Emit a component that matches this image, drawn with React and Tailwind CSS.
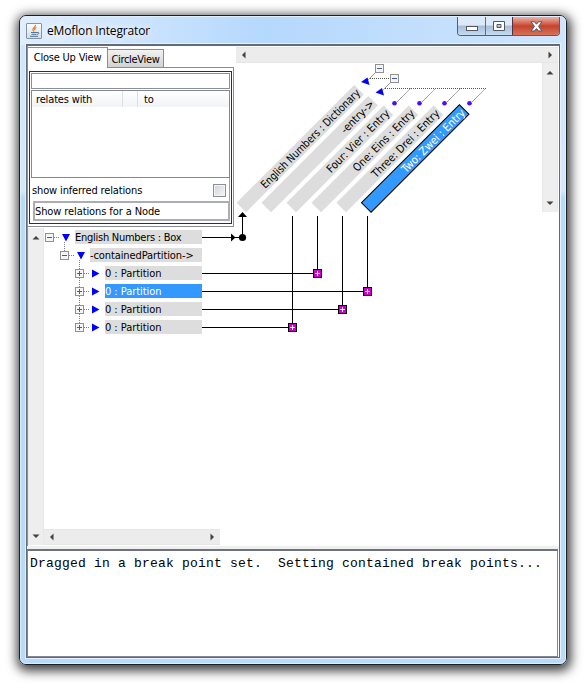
import React from "react";

const COLUMNS = [
  { label: "English Numbers : Dictionary", x: 236.5, len: 166.5, text: 135 },
  { label: "-entry->", x: 261.5, len: 151, text: 42 },
  { label: "Four: Vier : Entry", x: 286.5, len: 137.5, text: 84 },
  { label: "One: Eins : Entry", x: 311.5, len: 137.5, text: 82 },
  { label: "Three: Drei : Entry", x: 336.5, len: 137.5, text: 91 },
  { label: "Two: Zwei : Entry", x: 361.5, len: 138.5, text: 85, selected: true },
];

const LINKS = [
  { x: 317, y: 273 },
  { x: 367, y: 291 },
  { x: 342, y: 309 },
  { x: 292, y: 327 },
];

const ROWS = [
  { label: "English Numbers : Box", depth: 0, open: true, tracking: "tracking-[-0.26px]" },
  { label: "-containedPartition->", depth: 1, open: true, tracking: "tracking-[-0.1px]" },
  { label: "0 : Partition", depth: 2, tracking: "tracking-[-0.05px]" },
  { label: "0 : Partition", depth: 2, selected: true, tracking: "tracking-[-0.05px]" },
  { label: "0 : Partition", depth: 2, tracking: "tracking-[-0.05px]" },
  { label: "0 : Partition", depth: 2, last: true, tracking: "tracking-[-0.05px]" },
];

function Expander({ x, y, plus }) {
  return (
    <g shapeRendering="crispEdges">
      <rect x={x + 0.5} y={y + 0.5} width="8" height="8" fill="#f5f5f5" stroke="#919191" />
      <path d={`M${x + 2} ${y + 4.5}h5`} stroke="#3b5fae" />
      {plus && <path d={`M${x + 4.5} ${y + 2}v5`} stroke="#3b5fae" />}
    </g>
  );
}

function TreeRow({ label, depth, open, selected, last, tracking }) {
  const x = 1 + depth * 15;
  const w = 31 + depth * 15;
  return (
    <div className="flex h-[18px] items-center">
      <svg width={w} height="18" viewBox={`0 0 ${w} 18`} className="shrink-0">
        <g stroke="#808080" strokeDasharray="1 1" shapeRendering="crispEdges">
          <path d={`M${x + 9} 9.5h6`} />
          {depth > 0 && <path d={`M${x + 4.5} 0v${last ? 5 : depth === 2 ? 18 : 5}`} />}
          {open && <path d={`M${x + 19.5} 14v4`} />}
        </g>
        <Expander x={x} y={5} plus={!open} />
        {open ? (
          <path d={`M${x + 17} 6h8l-4 7.5z`} fill="#0000ff" />
        ) : (
          <path d={`M${x + 17} 5.5v8l7.5-4z`} fill="#0000ff" />
        )}
      </svg>
      <div
        className={
          "flex h-[14px] flex-1 items-center whitespace-nowrap pt-px text-[11px] leading-[14px] " +
          tracking +
          (selected ? " bg-[#3399ff] text-white" : " bg-[#dddddd] text-black")
        }
      >
        {label}
      </div>
    </div>
  );
}

function Arrow({ dir }) {
  const shapes = {
    up: "M0.5 6.5h7L4 3z",
    down: "M0.5 2.5h7L4 6z",
    left: "M5.5 0.5v7L2 4z",
    right: "M2.5 0.5v7L6 4z",
  };
  return (
    <svg width="8" height="8" viewBox="0 0 8 8" className="shrink-0">
      <path d={shapes[dir]} fill="#404040" />
    </svg>
  );
}

function HBar({ className }) {
  return (
    <div className={"flex h-4 shrink-0 items-center justify-between border-y border-[#e6e6e6] bg-[#ececec] px-1 " + className}>
      <Arrow dir="left" />
      <Arrow dir="right" />
    </div>
  );
}

function VBar({ className }) {
  return (
    <div
      className={
        "flex w-4 shrink-0 flex-col items-center justify-between border-x border-[#e8e8e8] bg-[#eeeeee] py-[5px] " + className
      }
    >
      <Arrow dir="up" />
      <Arrow dir="down" />
    </div>
  );
}

function Matrix() {
  return (
    <svg width="306" height="282" viewBox="236 63 306 282" className="shrink-0 overflow-visible">
      <g stroke="#555" fill="none" strokeDasharray="1 1" shapeRendering="crispEdges">
        <path d="M370 78.5h21M385 88.5h101" />
      </g>
      <g stroke="#777" fill="none" strokeWidth="1">
        <path d="M376 72l-10 10M391 82l-10 10M410.5 88.5l-14 14M435.5 88.5l-14 14M460.5 88.5l-14 14M485.5 88.5l-14 14" strokeDasharray="1.1 0.4" />
      </g>
      <Expander x={375} y={64} />
      <Expander x={390} y={74} />
      <path d="M361 82l6.500-4.500 2 7.500zM375.500 92.500l6.500-4.500 2 7.500z" fill="#0000ff" />
      {[394.5, 419.5, 444.5, 469.5].map((x) => (
        <circle key={x} cx={x} cy="103.300" r="2.300" fill="#4b0cff" />
      ))}
      {COLUMNS.map((c) => (
        <g key={c.x} transform={`translate(${c.x} 202.700) rotate(-45)`}>
          <rect
            width={c.len}
            height="13.500"
            fill={c.selected ? "#3399ff" : "#dddddd"}
            stroke={c.selected ? "#000" : "none"}
            strokeWidth="1"
          />
          <text
            x={c.len - 1.5}
            y="10.800"
            textAnchor="end"
            textLength={c.text}
            lengthAdjust="spacingAndGlyphs"
            fontSize="11"
            fill={c.selected ? "#fff" : "#000"}
          >
            {c.label}
          </text>
        </g>
      ))}
      <g stroke="#000" fill="none" shapeRendering="crispEdges">
        <path d="M202 237.500h40M242.500 237v-24" />
        {LINKS.map((l) => (
          <path key={l.x} d={`M202 ${l.y + 0.5}H${l.x}M${l.x + 0.5} ${l.y}V216`} />
        ))}
      </g>
      <path d="M231 233.500v8l4.500-4zM238 217h9l-4.500-5z" />
      <circle cx="242.500" cy="237.500" r="3.600" />
      {LINKS.map((l) => (
        <g key={l.x} shapeRendering="crispEdges">
          <rect x={l.x - 3.5} y={l.y - 3.5} width="8" height="8" fill="#cc00cc" stroke="#000" />
          <path d={`M${l.x - 2} ${l.y + 0.5}h5M${l.x + 0.5} ${l.y - 2}v5`} stroke="#fff" />
        </g>
      ))}
    </svg>
  );
}

function CloseUpPanel() {
  return (
    <div className="flex h-[180px] w-[206px] shrink-0 flex-col">
      <div className="flex h-5 shrink-0 items-end">
        <div className="flex h-5 w-[80px] shrink-0 items-center justify-center border-r border-t border-[#8e8f8f] bg-white pt-[2px] text-[11px] tracking-[-0.2px]">
          Close Up View
        </div>
        <div className="flex h-[18px] w-[56px] shrink-0 items-center justify-center border-r border-t border-[#898c95] bg-linear-to-b from-[#f2f2f2] to-[#d2d2d2] pt-[3px] text-[11px] tracking-[-0.3px]">
          CircleView
        </div>
      </div>
      <div className="flex flex-1 flex-col border-b border-r border-[#898c95]">
        <div className="ml-[79px] h-px shrink-0 bg-[#898c95]" />
        <div className="mx-px mb-[2px] mt-[3px] flex flex-1 flex-col border border-[#303030] p-px">
          <div className="h-4 shrink-0 border border-[#8c8f94] bg-white" />
          <div className="mt-px flex h-[88px] shrink-0 flex-col border border-[#828790] bg-white">
            <div className="flex h-4 items-center bg-linear-to-b from-white to-[#f2f3f5] text-[11px] tracking-[-0.15px]">
              <div className="h-full w-[91px] border-r border-[#dedfe1] pl-1 leading-[18px]">relates with</div>
              <div className="h-full w-[15px] border-r border-[#dedfe1]" />
              <div className="h-full flex-1 pl-[6px] leading-[18px]">to</div>
            </div>
          </div>
          <div className="flex h-[23px] shrink-0 items-center justify-between border-r border-[#a0a0a0] pl-px pr-[3px] pt-[2px] text-[11px] tracking-[-0.14px]">
            <span className="pt-[2px]">show inferred relations</span>
            <span className="h-[13px] w-[13px] border border-[#8e8f8f] bg-linear-to-br from-[#cfd3da] to-[#f6f6f6] outline-1 -outline-offset-2 outline-[#f4f4f4]" />
          </div>
          <div className="ml-[2px] flex h-5 shrink-0 items-center border-2 border-[#abadb3] bg-white pt-[2px] text-[11px] tracking-[-0.1px]">
            Show relations for a Node
          </div>
        </div>
      </div>
    </div>
  );
}

function TitleBar() {
  return (
    <div className="flex h-[28px] shrink-0 items-start pl-[5px] pr-[5px]">
      <div className="mt-[6px] flex h-4 w-4 shrink-0 items-center justify-center rounded-[1px] border border-[#8194a7] bg-linear-to-b from-[#fbfcfd] to-[#d4dce5]">
        <svg width="14" height="14" viewBox="0 0 14 14" fill="none">
          <path d="M8.500 1C9 3 5 4 6 6.200L7 7.500M9.500 3.500C7 4.500 7.500 5.500 8 6.300" stroke="#e8791e" strokeWidth="1.200" />
          <path d="M4 8.500h6M4.500 10.300h5M3 12.300h8M10 8.500c2.500-.8 2.500 1.500 0 2" stroke="#537895" strokeWidth="1" />
        </svg>
      </div>
      <div className="ml-[5px] mt-[5px] whitespace-nowrap font-['Open_Sans',sans-serif] text-[12px] leading-[18px] tracking-[-0.15px] [text-shadow:0_0_8px_#fff,0_0_8px_#fff]">
        eMoflon Integrator
      </div>
      <div className="ml-auto flex h-[19px] overflow-hidden rounded-b-[4px] border border-t-0 border-[#4e6078]">
        <div className="flex w-[28px] items-center justify-center border-r border-[#5c6f87] bg-linear-to-b from-[#dce9f7] from-45% via-[#a5bdd6] via-50% to-[#c4dbf2]">
          <svg width="12" height="5" viewBox="0 0 12 5" className="mt-[5px]">
            <rect x="0.500" y="0.500" width="11" height="4" fill="#fff" stroke="#535666" />
          </svg>
        </div>
        <div className="flex w-[27px] items-center justify-center border-r border-[#5c3038] bg-linear-to-b from-[#dce9f7] from-45% via-[#a5bdd6] via-50% to-[#c4dbf2]">
          <svg width="12" height="10" viewBox="0 0 12 10">
            <path fillRule="evenodd" d="M.5.500h11v9H.5zM4 3.500v3h4v-3z" fill="#fff" stroke="#535666" />
          </svg>
        </div>
        <div className="flex w-[46px] items-center justify-center bg-linear-to-b from-[#e9a99d] from-5% via-[#c4432d] via-50% to-[#d87158]">
          <svg width="13" height="11" viewBox="0 0 13 11">
            <path d="M1 .8h3.500l2 2.400 2-2.400H12L8.500 5.400 12 10H8.500l-2-2.400-2 2.400H1l3.500-4.600z" fill="#fff" stroke="#535666" />
          </svg>
        </div>
      </div>
    </div>
  );
}

export default function App() {
  return (
    <div className="h-[685px] w-[586px] overflow-hidden bg-white pl-[19px] pt-[15px] font-['Tahoma','DejaVu_Sans_Condensed','DejaVu_Sans',sans-serif] text-black">
      <div className="flex h-[650px] w-[548px] flex-col rounded-[7px] border border-[#1c1f24] bg-linear-to-b from-[#cfe5fd] from-0% via-[#d5e7fb] via-27% to-[#b9dafb] to-28% shadow-[1px_3px_11px_3px_rgba(0,0,0,0.75)]">
        <div className="flex min-h-0 flex-1 flex-col rounded-[6px] border border-[#e4f3ff]/80 pb-[4px]">
          <div className="-mb-[2px] rounded-t-[5px] bg-linear-to-r from-[#e0eefd] via-[#b5d8fd] via-45% to-[#cfe5fc]">
            <TitleBar />
          </div>
          <div className="mx-[4px] flex min-h-0 flex-1 flex-col border border-[#e6f3ff] bg-white">
            <div className="flex min-h-0 flex-1 flex-col border border-t-2 border-[#636b79]">
              <div className="flex min-h-0 flex-1 border-l border-[#8d929a]">
                <div className="flex w-[208px] shrink-0 flex-col">
                  <div className="h-px shrink-0" />
                  <CloseUpPanel />
                  <div className="mt-px flex h-[317px] shrink-0">
                    <VBar className="h-[317px]" />
                    <div className="flex w-[158px] shrink-0 flex-col justify-between">
                      <div className="flex flex-col">
                        {ROWS.map((r, i) => (
                          <TreeRow key={i} {...r} />
                        ))}
                      </div>
                      <HBar className="w-[176px]" />
                    </div>
                  </div>
                </div>
                <div className="flex flex-1 flex-col pt-px">
                  <HBar className="w-[322px]" />
                  <div className="flex">
                    <Matrix />
                    <VBar className="h-[149px]" />
                  </div>
                </div>
              </div>
              <div className="h-[3px] shrink-0 bg-[#f0f0f0]" />
              <div className="mr-px flex h-[108px] shrink-0 border border-t-2 border-[#828790] border-t-[#6d727c]">
                <div className="whitespace-pre pl-[2px] pt-[5px] font-['Liberation_Mono','Courier_New',monospace] text-[13px] leading-[16px] tracking-[0.2px]">
                  {"Dragged in a break point set.  Setting contained break points..."}
                </div>
              </div>
            </div>
          </div>
        </div>
      </div>
    </div>
  );
}
